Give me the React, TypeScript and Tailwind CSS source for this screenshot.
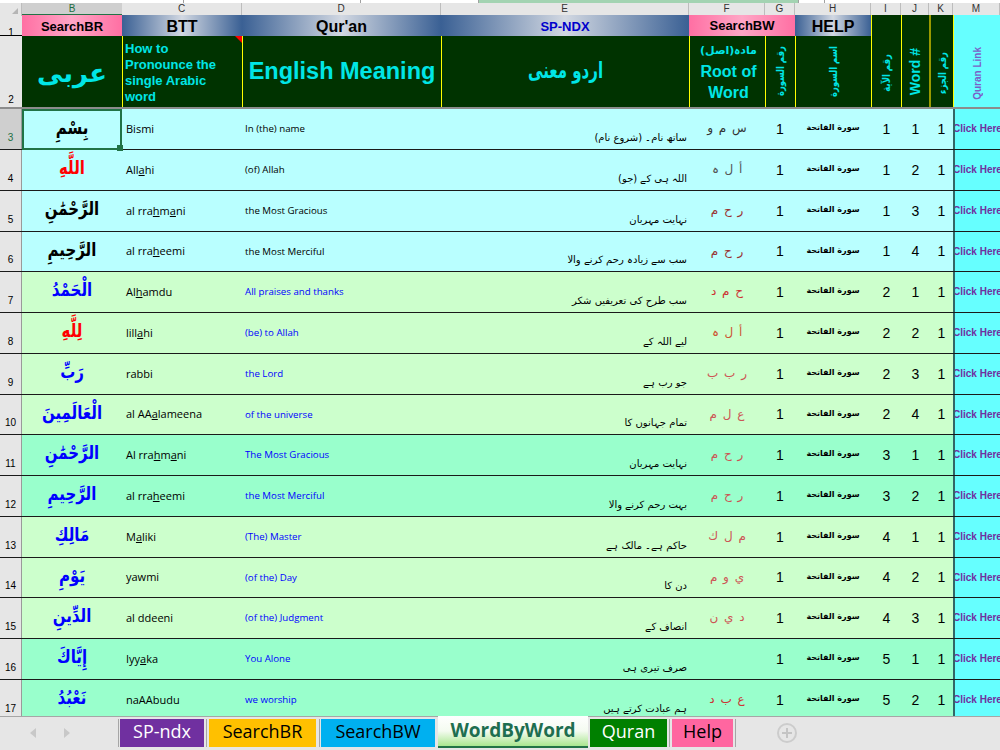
import React from "react";

const cols = "grid grid-cols-[22px_100px_120px_199px_248px_76px_30px_76px_30px_28px_24px_47px]";
const gold = "border-l border-l-[#ffff00]";
const arabicFont = "font-['DejaVu_Sans',sans-serif]";

type Row = {
  n: number; h: string; bg: string; ar: string; arc: string; tr: string; en: string; enc: string;
  ur: string; root: string; rc: string; a: number; w: number;
};

const CY = "bg-[#b9ffff]", LG = "bg-[#ccffcc]", MT = "bg-[#99ffcc]";
const K = "text-black", R = "text-[#ff0000]", B = "text-[#0000ff]";
const H41 = "h-[41px]", H40 = "h-[40px]";

const rows: Row[] = [
  { n: 3, h: H41, bg: CY, ar: "بِسْمِ", arc: K, tr: "Bismi", en: "In (the) name", enc: K, ur: "ساتھ نام۔ (شروع نام)", root: "س م و", rc: "text-[#333333]", a: 1, w: 1 },
  { n: 4, h: H41, bg: CY, ar: "اللَّهِ", arc: R, tr: "All_ahi", en: "(of) Allah", enc: K, ur: "اللہ ہی کے (جو)", root: "أ ل ہ", rc: "text-[#555555]", a: 1, w: 2 },
  { n: 5, h: H41, bg: CY, ar: "الرَّحْمَٰنِ", arc: K, tr: "al rra_hm_ani", en: "the Most Gracious", enc: K, ur: "نہایت مہربان", root: "ر ح م", rc: "text-[#993333]", a: 1, w: 3 },
  { n: 6, h: H40, bg: CY, ar: "الرَّحِيمِ", arc: K, tr: "al rra_heemi", en: "the Most Merciful", enc: K, ur: "سب سے زیادہ رحم کرنے والا", root: "ر ح م", rc: "text-[#993333]", a: 1, w: 4 },
  { n: 7, h: H41, bg: LG, ar: "الْحَمْدُ", arc: B, tr: "Al_hamdu", en: "All praises and thanks", enc: B, ur: "سب طرح کی تعریفیں شکر", root: "ح م د", rc: "text-[#cc3333]", a: 2, w: 1 },
  { n: 8, h: H41, bg: LG, ar: "لِلَّهِ", arc: R, tr: "lill_ahi", en: "(be) to Allah", enc: B, ur: "لیے اللہ کے", root: "أ ل ہ", rc: "text-[#cc5533]", a: 2, w: 2 },
  { n: 9, h: H41, bg: LG, ar: "رَبِّ", arc: B, tr: "rabbi", en: "the Lord", enc: B, ur: "جو رب ہے", root: "ر ب ب", rc: "text-[#cc5555]", a: 2, w: 3 },
  { n: 10, h: H40, bg: LG, ar: "الْعَالَمِينَ", arc: B, tr: "al AA_alameena", en: "of the universe", enc: B, ur: "تمام جہانوں کا", root: "ع ل م", rc: "text-[#cc5555]", a: 2, w: 4 },
  { n: 11, h: H41, bg: MT, ar: "الرَّحْمَٰنِ", arc: B, tr: "Al rra_hm_ani", en: "The Most Gracious", enc: B, ur: "نہایت مہربان", root: "ر ح م", rc: "text-[#cc5555]", a: 3, w: 1 },
  { n: 12, h: H41, bg: MT, ar: "الرَّحِيمِ", arc: B, tr: "al rra_heemi", en: "the Most Merciful", enc: B, ur: "بہت رحم کرنے والا", root: "ر ح م", rc: "text-[#cc5555]", a: 3, w: 2 },
  { n: 13, h: H41, bg: LG, ar: "مَالِكِ", arc: B, tr: "M_aliki", en: "(The) Master", enc: B, ur: "حاکم ہے۔ مالک ہے", root: "م ل ك", rc: "text-[#cc5555]", a: 4, w: 1 },
  { n: 14, h: H40, bg: LG, ar: "يَوْمِ", arc: B, tr: "yawmi", en: "(of the) Day", enc: B, ur: "دن کا", root: "ي و م", rc: "text-[#cc5555]", a: 4, w: 2 },
  { n: 15, h: H41, bg: LG, ar: "الدِّينِ", arc: B, tr: "al ddeeni", en: "(of the) Judgment", enc: B, ur: "انصاف کے", root: "د ي ن", rc: "text-[#cc5555]", a: 4, w: 3 },
  { n: 16, h: H41, bg: MT, ar: "إِيَّاكَ", arc: B, tr: "Iyy_aka", en: "You Alone", enc: B, ur: "صرف تیری ہی", root: "", rc: "text-[#cc5555]", a: 5, w: 1 },
  { n: 17, h: H41, bg: MT, ar: "نَعْبُدُ", arc: B, tr: "naAAbudu", en: "we worship", enc: B, ur: "ہم عبادت کرتے ہیں", root: "ع ب د", rc: "text-[#cc3333]", a: 5, w: 2 },
];

function Translit({ text }: { text: string }) {
  const parts = text.split("_");
  return (
    <>
      {parts.map((p, i) =>
        i === 0 ? (
          <span key={i}>{p}</span>
        ) : (
          <span key={i}>
            <u>{p[0]}</u>
            {p.slice(1)}
          </span>
        )
      )}
    </>
  );
}

const columnLetters = ["C", "D", "E", "F", "G", "H", "I", "J", "K", "M"];

function VerticalHead({ children, className, inner = "" }: { children: React.ReactNode; className: string; inner?: string }) {
  return (
    <div className={`flex items-center justify-center overflow-hidden bg-[#003300] ${className}`}>
      <span className={`[writing-mode:vertical-rl] rotate-180 whitespace-nowrap text-[#00e6e6] ${inner}`}>{children}</span>
    </div>
  );
}

const blue = "bg-[linear-gradient(to_right,#3a6094,#d2d8e2_50%,#3a6094)]";
const pink = "bg-[linear-gradient(to_right,#ff6fa3,#ffa6c6_50%,#ff6fa3)]";

export default function App() {
  return (
    <div className="flex h-[750px] w-[1000px] flex-col overflow-hidden bg-[#e6e6e6] font-['Liberation_Sans',sans-serif] text-black">
      {/* scroll strip */}
      <div className="flex h-[3px] shrink-0 gap-[1px] bg-[#a0a0a0]">
        <div className="w-[183px] bg-white" />
        <div className="w-[176px] bg-white" />
        <div className="w-[117px] bg-white" />
        <div className="w-[319px] bg-[#a3d3b2]" />
        <div className="w-[25px] bg-white" />
        <div className="flex-1 bg-white" />
      </div>

      {/* column letters */}
      <div className={`${cols} h-[12px] shrink-0 text-[10px] leading-[11px]`}>
        <div className="relative border-r border-[#bdbdbd]">
          <div className="absolute bottom-[2px] right-[3px] h-0 w-0 border-b-[6px] border-l-[6px] border-b-[#b5b5b5] border-l-transparent" />
        </div>
        <div className="border-b-2 border-b-[#217346] bg-[#cfcfcf] text-center text-[#1e6e42]">B</div>
        {columnLetters.map((l) => (
          <div key={l} className="border-r border-b border-[#bdbdbd] text-center text-[#333333]">
            {l}
          </div>
        ))}
      </div>

      {/* row 1 */}
      <div className={`${cols} h-[21px] shrink-0 border-b border-b-black`}>
        <div className="flex items-end justify-center text-[10px] leading-[12px]">1</div>
        <div className={`${pink} flex items-center justify-center text-[13px] font-bold`}>SearchBR</div>
        <div className={`${blue} flex items-center justify-center text-[16px] font-bold`}>BTT</div>
        <div className={`${blue} flex items-center justify-center text-[16px] font-bold`}>Qur'an</div>
        <div className={`${blue} flex items-center justify-center text-[13px] font-bold text-[#0000cc]`}>SP-NDX</div>
        <div className={`${pink} col-span-2 flex items-center justify-center pb-[2px] text-[13px] font-bold`}>SearchBW</div>
        <div className={`${blue} flex items-center justify-center text-[16px] font-bold`}>HELP</div>
        <div className={`${gold} bg-[#003300]`} />
        <div className={`${gold} bg-[#003300]`} />
        <div className="border-l-2 border-l-[#999900] bg-[#003300]" />
        <div className={`${gold} bg-[#66ffff]`} />
      </div>

      {/* row 2 */}
      <div className={`${cols} h-[73px] shrink-0 border-b-2 border-b-[#8c8c8c]`}>
        <div className="flex items-end justify-center pb-[1px] text-[10px] leading-[12px]">2</div>
        <div className={`flex items-center justify-center bg-[#003300] pt-[4px] text-[26px] font-bold text-[#00e6e6] ${arabicFont}`} dir="rtl">
          عربى
        </div>
        <div className={`relative ${gold} bg-[#003300] px-[2px] pt-[5px] text-[13px] font-bold leading-[16px] text-[#00e6e6]`}>
          How to
          <br />
          Pronounce the
          <br />
          single Arabic
          <br />
          word
          <div className="absolute right-0 top-0 h-0 w-0 border-l-[7px] border-t-[7px] border-l-transparent border-t-[#ff0000]" />
        </div>
        <div className={`flex items-center justify-center ${gold} bg-[#003300] text-[23.5px] font-bold text-[#00e6e6]`}>
          English Meaning
        </div>
        <div className={`flex items-center justify-center ${gold} bg-[#003300] text-[#00e6e6]`}>
          <span className={`scale-y-150 text-[15px] font-bold ${arabicFont}`} dir="rtl">اردو معنی</span>
        </div>
        <div className={`flex flex-col items-center ${gold} bg-[#003300] pl-[2px] pt-[5px] text-[16px] font-bold leading-[21px] text-[#00e6e6]`}>
          <span className={`${arabicFont} text-[11px] leading-[20px]`} dir="rtl">مادہ(اصل)</span>
          <span className="text-center">Root of Word</span>
        </div>
        <VerticalHead className={gold} inner={`scale-x-125 text-[8.5px] font-bold ${arabicFont}`}>رقم السورة</VerticalHead>
        <VerticalHead className={gold} inner={`scale-x-125 text-[8.5px] font-bold ${arabicFont}`}>اسم السورة</VerticalHead>
        <VerticalHead className={`${gold} pt-[3px]`} inner={`scale-x-125 text-[8.5px] font-bold ${arabicFont}`}>رقم الآية</VerticalHead>
        <VerticalHead className={gold} inner="text-[14px] font-bold">Word #</VerticalHead>
        <VerticalHead className="border-l-2 border-l-[#999900] pt-[3px]" inner={`scale-x-125 text-[8.5px] font-bold ${arabicFont}`}>رقم الجزء</VerticalHead>
        <div className={`flex items-center justify-center ${gold} bg-[#66ffff] pt-[3px]`}>
          <span className="[writing-mode:vertical-rl] rotate-180 text-[10px] font-bold text-[#7a5fc8]">Quran Link</span>
        </div>
      </div>

      {/* data rows */}
      <div className="min-h-0 flex-1 overflow-hidden">
        {rows.map((r) => {
          const selected = r.n === 3;
          return (
            <div key={r.n} className={`${cols} ${r.h} border-b border-b-[#1a1a1a]`}>
              <div
                className={`flex items-end justify-center border-r border-[#9a9a9a] pb-[5px] text-[10px] leading-[12px] ${
                  selected ? "bg-[#cfcfcf] text-[#1e6e42]" : "bg-[#e6e6e6] text-black"
                }`}
              >
                {r.n}
              </div>
              <div
                className={`relative flex items-center justify-center pb-[3px] font-bold leading-none ${r.bg} ${r.arc} ${arabicFont} ${
                  selected ? "z-10 -mb-[1px] border-2 border-[#217346]" : ""
                }`}
              >
                <span className="scale-y-125 text-[15px]" dir="rtl">{r.ar}</span>
                {selected && <div className="absolute -bottom-[3px] -right-[3px] h-[6px] w-[6px] bg-[#217346]" />}
              </div>
              <div className={`flex items-center overflow-hidden pl-[4px] font-['Open_Sans',sans-serif] text-[11px] ${r.bg} text-black`}>
                <span className="whitespace-pre"><Translit text={r.tr} /></span>
              </div>
              <div className={`flex items-center pl-[3px] pt-[1px] font-['Open_Sans',sans-serif] text-[9.7px] ${r.bg} ${r.enc}`}>
                {r.en}
              </div>
              <div className={`flex items-end justify-start pb-[3px] pr-[2px] text-[10px] leading-[16px] text-black ${r.bg} ${arabicFont}`} dir="rtl">
                {r.ur}
              </div>
              <div className={`flex items-center justify-center pb-[2px] text-[12px] [word-spacing:2px] ${r.bg} ${r.rc} ${arabicFont}`} dir="rtl">
                {r.root}
              </div>
              <div className={`flex items-center justify-center text-[14px] ${r.bg}`}>1</div>
              <div className={`flex items-center justify-center pb-[2px] text-[8px] font-bold ${r.bg} ${arabicFont}`} dir="rtl">
                سورة الفاتحة
              </div>
              <div className={`flex items-center justify-center pl-[1px] text-[14px] ${r.bg}`}>{r.a}</div>
              <div className={`flex items-center justify-center pl-[1px] text-[14px] ${r.bg}`}>{r.w}</div>
              <div className={`flex items-center justify-center pl-[1px] text-[14px] ${r.bg}`}>1</div>
              <div className="flex items-center overflow-hidden border-l-2 border-l-[#336666] bg-[#66ffff] pb-[1px] text-[10px] font-bold text-[#7030a0]">
                <span className="-ml-[2px] whitespace-nowrap">Click Here</span>
              </div>
            </div>
          );
        })}
      </div>

      {/* sheet tabs */}
      <div className="flex h-[34px] shrink-0 items-start border-t border-t-[#a6a6a6] bg-[#e6e6e6] font-['Open_Sans',sans-serif] text-[18px] leading-[25px]">
        <div className="mt-[11px] flex w-[118px] items-start pl-[30px]">
          <div className="h-0 w-0 border-y-[5px] border-r-[6px] border-y-transparent border-r-[#c8c8c8]" />
          <div className="ml-[28px] h-0 w-0 border-y-[5px] border-l-[6px] border-y-transparent border-l-[#c8c8c8]" />
        </div>
        <div className="mt-[2px] flex h-[28px] items-stretch">
          <div className="w-[1px] bg-[#a6a6a6]" />
          <div className="ml-[1px] w-[84px] bg-[#7030a0] text-center text-white">SP-ndx</div>
          <div className="ml-[2px] w-[1px] bg-[#a6a6a6]" />
          <div className="ml-[2px] w-[107px] bg-[#ffc000] text-center">SearchBR</div>
          <div className="ml-[3px] w-[1px] bg-[#a6a6a6]" />
          <div className="ml-[1px] w-[114px] bg-[#00b0f0] text-center">SearchBW</div>
        </div>
        <div className="-mt-[1px] ml-[3px] h-[32px] w-[150px] border-b-2 border-b-[#217346] bg-[linear-gradient(to_bottom,#ffffff,#f4fbf0_50%,#a9e68f)] pt-[2px] text-center text-[19px] font-bold text-[#1e6e50]">
          WordByWord
        </div>
        <div className="mt-[2px] flex h-[28px] items-stretch">
          <div className="ml-[2px] w-[77px] bg-[#008000] text-center text-white">Quran</div>
          <div className="ml-[2px] w-[1px] bg-[#a6a6a6]" />
          <div className="ml-[2px] w-[61px] bg-[#ff66a0] text-center">Help</div>
          <div className="ml-[2px] w-[1px] bg-[#a6a6a6]" />
        </div>
        <div className="ml-[41px] mt-[6px] flex h-[20px] w-[20px] items-center justify-center rounded-full border-2 border-[#cccccc]">
          <svg width="12" height="12" viewBox="0 0 12 12" aria-hidden="true">
            <path d="M6 1v10M1 6h10" stroke="#c4c4c4" strokeWidth="2" fill="none" />
          </svg>
        </div>
      </div>
    </div>
  );
}
